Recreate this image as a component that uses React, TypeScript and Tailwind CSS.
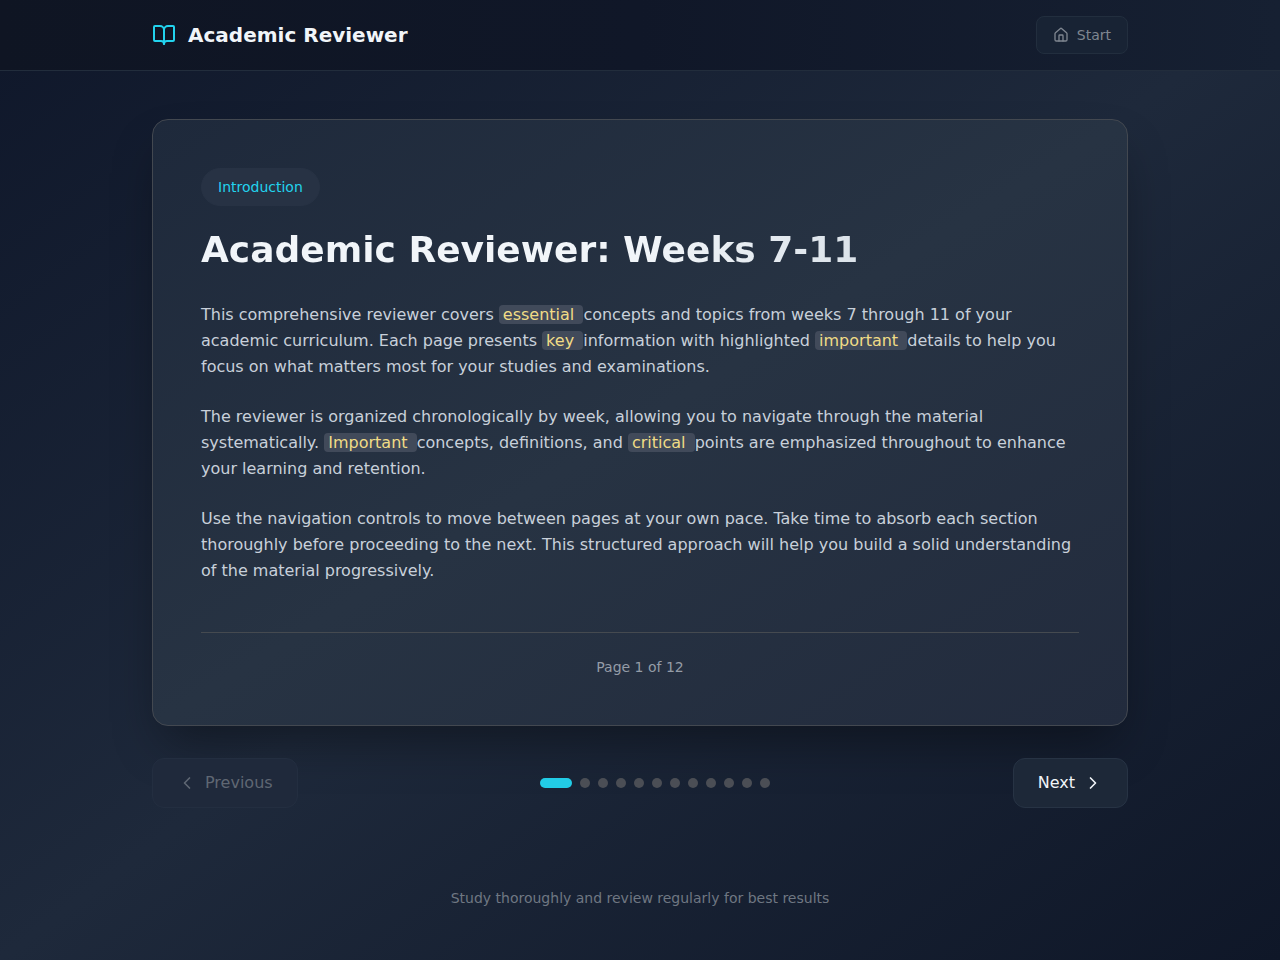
import { useState } from "react";
import { BookOpen, ChevronLeft, ChevronRight, House } from "lucide-react";

const TOTAL_PAGES = 12;

function Mark({ children }: { children: string }) {
  return (
    <mark className="rounded-sm bg-[#414a5a] px-1 text-[#f0dc86]">
      {children}
    </mark>
  );
}

export default function App() {
  const [page, setPage] = useState<number>(1);

  return (
    <div className="min-h-screen bg-gradient-to-br from-[#0f172a] via-[#1e293b] to-[#0f1728] font-['DejaVu_Sans',sans-serif] text-[#f1f5f9]">
      <header className="border-b border-[#222d3c] bg-gradient-to-r from-[#0f1523] via-[#101728] to-[#162032]">
        <div className="mx-auto flex max-w-5xl items-center justify-between px-6 py-4">
          <div className="flex items-center gap-3">
            <BookOpen className="size-6 text-[#22d3ee]" />
            <h1 className="text-xl font-bold">Academic Reviewer</h1>
          </div>
          <button
            onClick={() => setPage(1)}
            className="flex items-center gap-2 rounded-lg border border-[#222e3e] bg-[#182334] px-4 py-2 text-sm text-[#7f8690]"
          >
            <House className="size-4" />
            Start
          </button>
        </div>
      </header>

      <main className="mx-auto max-w-5xl px-6 py-12">
        <article className="rounded-2xl border border-[#434850] bg-gradient-to-br from-[#1e293b] via-[#273343] to-[#222b3d] p-12 shadow-2xl shadow-black/40">
          <span className="block w-fit rounded-full border border-[#273244] bg-[#273244] px-4 py-2 text-sm text-[#22d3ee]">
            Introduction
          </span>
          <h2 className="mt-6 bg-gradient-to-r from-[#f1f5f9] via-[#f1f5f9] to-[#c5d0da] bg-clip-text text-4xl font-bold text-transparent">
            Academic Reviewer: Weeks 7-11
          </h2>

          <div className="mt-8 space-y-6 leading-[26px] text-[#c8d0da]">
            <p>
              This comprehensive reviewer covers <Mark>essential </Mark>concepts and topics from weeks 7
              through 11 of your academic curriculum. Each page presents <Mark>key </Mark>information with
              highlighted <Mark>important </Mark>details to help you focus on what matters most for your
              studies and examinations.
            </p>
            <p>
              The reviewer is organized chronologically by week, allowing you to navigate through the
              material systematically. <Mark>Important </Mark>concepts, definitions, and{" "}
              <Mark>critical </Mark>points are emphasized throughout to enhance your learning and retention.
            </p>
            <p>
              Use the navigation controls to move between pages at your own pace. Take time to absorb each
              section thoroughly before proceeding to the next. This structured approach will help you build
              a solid understanding of the material progressively.
            </p>
          </div>

          <div className="mt-12 border-t border-[#454a50] pt-6 text-center text-sm text-[#949ca7]">
            Page {page} of {TOTAL_PAGES}
          </div>
        </article>

        <nav className="mt-8 flex items-center justify-between">
          <button
            disabled={page === 1}
            onClick={() => setPage(page - 1)}
            className="flex items-center gap-2 rounded-xl border border-[#273344] bg-[#1d2838] px-6 py-3 disabled:border-[#232e40] disabled:bg-[#1f293b] disabled:text-[#5f6773]"
          >
            <ChevronLeft className="size-5" />
            Previous
          </button>

          <div className="flex items-center gap-2">
            {Array.from({ length: TOTAL_PAGES }, (_, i) => (
              <button
                key={i}
                aria-label={`Go to page ${i + 1}`}
                onClick={() => setPage(i + 1)}
                className={
                  i + 1 === page
                    ? "h-[10px] w-8 rounded-full bg-[#22cce6]"
                    : "size-[10px] rounded-full bg-[#4b4e55]"
                }
              />
            ))}
          </div>

          <button
            disabled={page === TOTAL_PAGES}
            onClick={() => setPage(page + 1)}
            className="flex items-center gap-2 rounded-xl border border-[#273344] bg-[#1d2838] px-6 py-3 disabled:border-[#232e40] disabled:bg-[#1f293b] disabled:text-[#5f6773]"
          >
            Next
            <ChevronRight className="size-5" />
          </button>
        </nav>
      </main>

      <footer className="py-8 text-center text-sm text-[#6f7782]">
        Study thoroughly and review regularly for best results
      </footer>
    </div>
  );
}
